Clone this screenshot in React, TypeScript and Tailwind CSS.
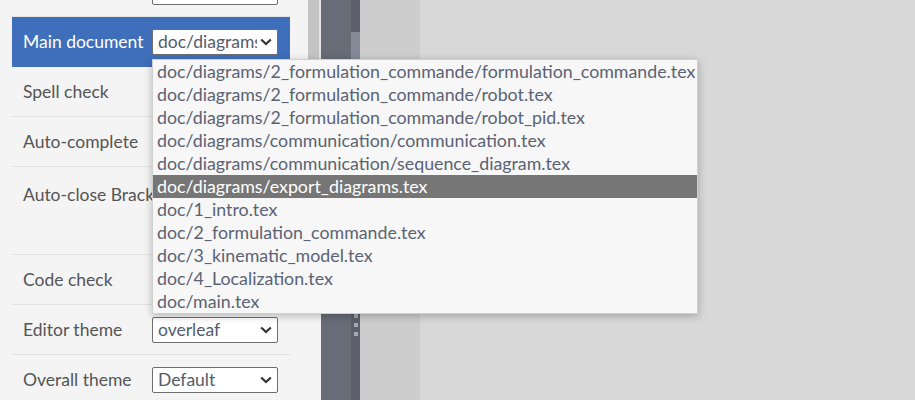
import React from "react";

const Chevron = () => (
  <svg width="12" height="8" viewBox="0 0 12 8" className="shrink-0">
    <path d="M1.2 1.5 L6 6 L10.8 1.5" fill="none" stroke="#333333" strokeWidth="2.2" />
  </svg>
);

const Select = ({ value }: { value: string }) => (
  <div className="flex h-[26px] w-[126px] items-center justify-between rounded-[2px] border border-[#6e6e6e] bg-white pl-[5px] pr-[5px]">
    <span className="w-[99px] overflow-hidden whitespace-nowrap text-[17.5px] leading-[24px] text-[#525c6c]">{value}</span>
    <Chevron />
  </div>
);

const Row = ({
  label,
  value,
  active,
  tall,
}: {
  label: string;
  value?: string;
  active?: boolean;
  tall?: boolean;
}) => (
  <div
    className={
      active
        ? "flex h-[50px] items-center bg-[#3f6fba] pl-[11px]"
        : tall
        ? "flex h-[88px] items-start border-b border-[#e2e2e2] pl-[11px] pt-[14px]"
        : "flex h-[50px] items-center border-b border-[#e2e2e2] pl-[11px]"
    }
  >
    <div
      className={
        active
          ? "w-[129px] shrink-0 whitespace-nowrap pt-[1px] text-[17.5px] text-white"
          : "w-[129px] shrink-0 whitespace-nowrap pt-[1px] text-[17.5px] text-[#555555]"
      }
    >
      {label}
    </div>
    {value !== undefined && <Select value={value} />}
  </div>
);

const items = [
  "doc/diagrams/2_formulation_commande/formulation_commande.tex",
  "doc/diagrams/2_formulation_commande/robot.tex",
  "doc/diagrams/2_formulation_commande/robot_pid.tex",
  "doc/diagrams/communication/communication.tex",
  "doc/diagrams/communication/sequence_diagram.tex",
  "doc/diagrams/export_diagrams.tex",
  "doc/1_intro.tex",
  "doc/2_formulation_commande.tex",
  "doc/3_kinematic_model.tex",
  "doc/4_Localization.tex",
  "doc/main.tex",
];

export default function App() {
  return (
    <div
      className="relative flex h-[400px] w-[915px] overflow-hidden"
      style={{ fontFamily: "Lato, 'Open Sans', sans-serif" }}
    >
      {/* Settings panel */}
      <div className="flex w-[321px] shrink-0 bg-[#f4f4f4]">
        <div className="w-[308px] shrink-0 px-[12px] pr-[18px]">
          <div className="-mt-[33px]">
            <Row label="" value="" />
            <Row label="Main document" value="doc/diagrams/export_diagrams.tex" active />
            <Row label="Spell check" value="" />
            <Row label="Auto-complete" value="" />
            <Row label="Auto-close Brackets" tall />
            <Row label="Code check" />
            <Row label="Editor theme" value="overleaf" />
            <Row label="Overall theme" value="Default" />
          </div>
        </div>
        <div className="flex w-[13px] shrink-0">
          <div className="h-[200px] w-[11px] bg-[#c4c4c4]" />
          <div className="h-[200px] w-[2px] bg-[#e4e4e4]" />
        </div>
      </div>

      {/* Divider / toolbar strip */}
      <div className="w-[30px] shrink-0 bg-[#676c77]" />
      <div className="flex w-[9px] shrink-0 flex-col bg-[#5a5f69]">
        <div className="mt-[32px] h-[110px] w-full bg-[#858a99]" />
        <div className="mt-[172px] flex flex-col items-center gap-[5px] pl-[1px]">
          <div className="h-[4px] w-[4px] bg-[#a3aab8]" />
          <div className="h-[4px] w-[4px] bg-[#a3aab8]" />
          <div className="h-[4px] w-[4px] bg-[#a3aab8]" />
        </div>
      </div>

      {/* Preview area */}
      <div className="w-[60px] shrink-0 bg-[#cdcdcd]" />
      <div className="flex-1 bg-[#d8d8d8]" />

      {/* Dropdown popup */}
      <div className="absolute left-[152px] top-[59px] w-[546px] border border-[#cfcfcf] bg-[#f7f7f7] shadow-[0_2px_8px_rgba(0,0,0,0.25)]">
        {items.map((it, i) => (
          <div
            key={it}
            className={
              i === 5
                ? "h-[23px] whitespace-nowrap bg-[#767676] px-[4px] text-[17.8px] leading-[23px] text-white"
                : "h-[23px] whitespace-nowrap px-[4px] text-[17.8px] leading-[23px] text-[#5a6273]"
            }
          >
            {it}
          </div>
        ))}
      </div>
    </div>
  );
}
